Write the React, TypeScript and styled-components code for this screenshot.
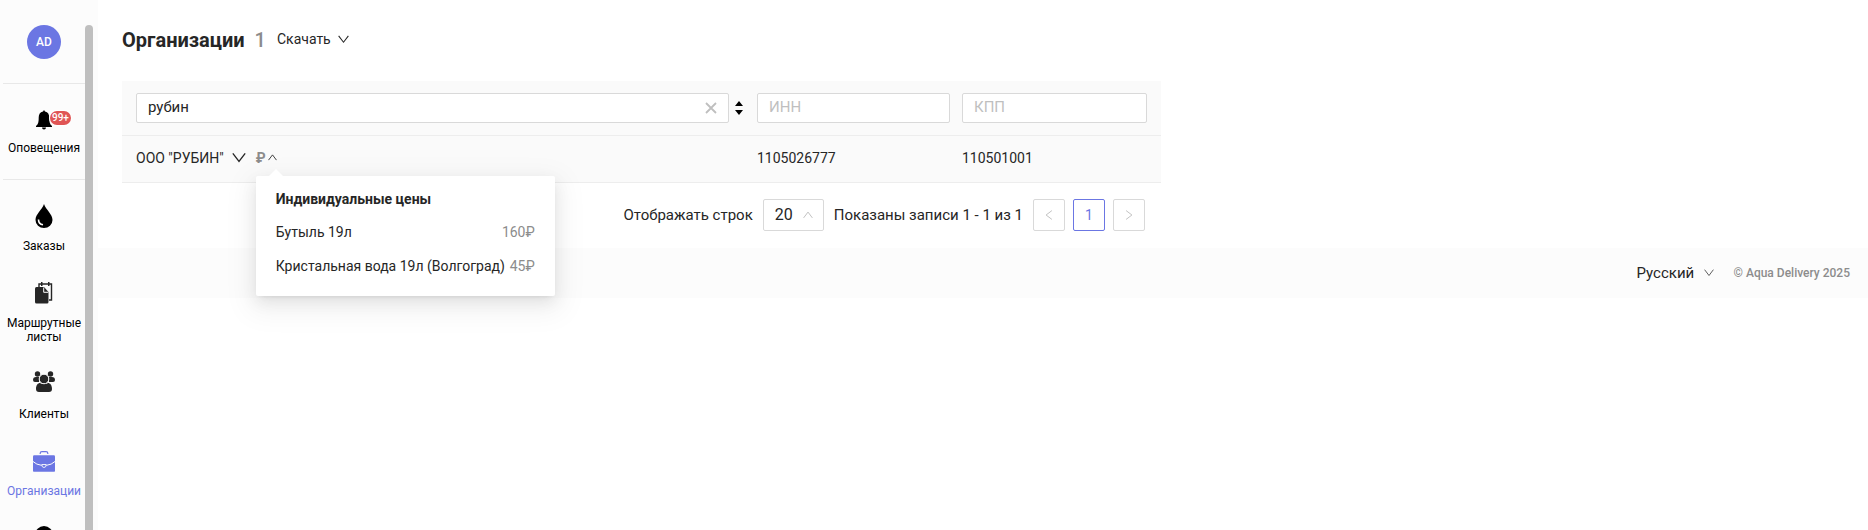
import React from 'react';
import styled, { createGlobalStyle, css } from 'styled-components';

const Global = createGlobalStyle`
  *, *::before, *::after { box-sizing: border-box; }
  body { margin: 0; background: #fff; color: #262626; font: 14px/22px Roboto, sans-serif; }
  html { height: 100%; overflow: hidden; }
  body, #root { height: 100%; }
  button, input, select { font: inherit; color: inherit; margin: 0; }
  button { background: none; border: 0; padding: 0; cursor: pointer; }
  svg { display: block; }
  h1, h2, p { margin: 0; padding: 0; }
`;

const Shell = styled.div`display: flex; height: 100vh; overflow: hidden;`;

const Side = styled.nav`
  flex: 0 0 98px; display: flex; background: #fcfcfc; padding-top: 25px; overflow: hidden;
`;
const SideList = styled.div`
  width: 82px; margin-left: 3px; display: flex; flex-direction: column; flex-shrink: 0;
`;
const Avatar = styled.button`
  width: 34px; height: 34px; flex-shrink: 0; border-radius: 50%; background: #6b76e3; color: #fff;
  font-size: 12px; font-weight: 500; margin: 0 auto 24px;
`;
const NavItem = styled.a<{ $h: number; $top: number; $gap: number; $active?: boolean; $line?: boolean }>`
  height: ${p => p.$h}px; padding-top: ${p => p.$top}px; gap: ${p => p.$gap}px; flex-shrink: 0;
  display: flex; flex-direction: column; align-items: center;
  font-size: 12px; line-height: 14px; text-align: center; text-decoration: none;
  color: ${p => (p.$active ? '#6b76e3' : '#000')};
  ${p => p.$line && css`border-top: 1px solid #e8e8e8;`}
`;
const IconWrap = styled.span`position: relative; display: block;`;
const Count = styled.span`
  position: absolute; left: 14px; top: 1px; height: 14px; padding: 0 2px; border-radius: 7px;
  background: #e05555; color: #fff; font-size: 10px; line-height: 14px; font-weight: 500;
  box-shadow: 0 0 0 1px #fff;
`;
const ScrollThumb = styled.div`width: 8px; height: 100%; border-radius: 4px 4px 0 0; background: #bfbfbf;`;

const Content = styled.div`flex: 1; min-width: 0;`;
const Main = styled.main`padding: 28px 24px 17px;`;
const Head = styled.header`display: flex; align-items: center; height: 24px; margin-bottom: 29px;`;
const Title = styled.h1`font-size: 20px; line-height: 24px; font-weight: 700;`;
const Total = styled.span`font-size: 20px; line-height: 24px; font-weight: 500; color: #8c8c8c; margin: 0 11px 0 10px;`;
const TextButton = styled.button`display: flex; align-items: center; gap: 7px; line-height: 20px; padding-bottom: 2px;`;

const Block = styled.section`width: 1039px; max-width: 100%;`;
const Table = styled.table`
  width: 100%; table-layout: fixed; border-collapse: collapse; background: #fafafa;
  th, td { border-bottom: 1px solid #ededed; padding: 0 0 0 14px; text-align: left; font-weight: 400; }
  th { height: 54px; }
  td { height: 47px; padding-bottom: 2px; }
  th + th, td + td { padding-left: 0; padding-right: 12px; }
  th:last-child { padding-right: 14px; }
`;
const Cell = styled.div`display: flex; align-items: center;`;
const Field = styled.label`
  flex: 1; min-width: 0; height: 30px; display: flex; align-items: center; padding: 0 11px;
  background: #fff; border: 1px solid #d9d9d9; border-radius: 2px;
`;
const Input = styled.input`
  flex: 1; min-width: 0; border: 0; outline: 0; padding: 0 0 2px; background: none; font-size: 15px; line-height: 20px; height: 22px;
  &::placeholder { color: #bfbfbf; opacity: 1; }
`;
const Sort = styled.button`margin: 0 14px 0 6px;`;
const NameCell = styled.div`display: flex; align-items: center;`;
const ArrowButton = styled.button`margin: 0 10px 0 8px;`;
const PriceAnchor = styled.div`position: relative;`;
const PriceButton = styled.button`display: flex; align-items: center; gap: 2px; font-weight: 700; color: #8c8c8c;`;
const Popover = styled.div`
  position: absolute; z-index: 2; left: 0; top: 29px; width: 299px; padding: 12px 20px 7px;
  background: #fff; border-radius: 2px; white-space: nowrap;
  box-shadow: 0 3px 6px -4px rgba(0,0,0,.12), 0 6px 16px rgba(0,0,0,.08), 0 9px 28px 8px rgba(0,0,0,.05);
  &::before {
    content: ''; position: absolute; left: 13px; top: -7px; border: solid transparent;
    border-width: 0 7px 7px; border-bottom-color: #fff;
  }
`;
const PopTitle = styled.h2`font-size: 14px; line-height: 22px; font-weight: 700; margin-bottom: 11px;`;
const PriceRow = styled.p`display: flex; justify-content: space-between; line-height: 22px; margin-bottom: 12px;`;
const Price = styled.span`color: #8c8c8c;`;

const Pager = styled.div`display: flex; align-items: center; justify-content: flex-end; padding: 16px 16px 0 0; font-size: 15px;`;
const SelectBox = styled.div<{ $wide?: boolean }>`
  position: relative; display: flex; align-items: center;
  svg { position: absolute; right: ${p => (p.$wide ? 0 : 11)}px; pointer-events: none; }
`;
const SizeSelect = styled.select`
  appearance: none; width: 61px; height: 32px; padding: 0 0 0 11px;
  border: 1px solid #d9d9d9; border-radius: 2px; background: #fff; font-size: 16px;
`;
const PagerLabel = styled.label`margin-right: 10px;`;
const Range = styled.span`margin: 0 2px 0 10px;`;
const PageButton = styled.button<{ $current?: boolean }>`
  width: 32px; height: 32px; margin-left: 8px; border-radius: 2px; display: grid; place-items: center;
  border: 1px solid ${p => (p.$current ? '#6b76e3' : '#d9d9d9')};
  color: ${p => (p.$current ? '#6b76e3' : '#bfbfbf')}; font-size: 14px;
`;

const Footer = styled.footer`
  height: 50px; background: #fcfcfc; display: flex; align-items: center; justify-content: flex-end;
  padding-right: 18px; gap: 20px;
`;
const LangSelect = styled.select`appearance: none; border: 0; background: none; padding: 0; width: 77px; font-size: 15px;`;
const Copy = styled.span`font-size: 12px; font-weight: 500; color: #8c8c8c;`;

function Chevron({ dir = 'down', size = 10, color = '#262626' }: { dir?: 'down' | 'up' | 'left' | 'right'; size?: number; color?: string }) {
  const d = { down: 'M.7 2l5.300 7L11.300 2', up: 'M.7 9.500l5.300-7 5.300 7', left: 'M9.500 .7l-7 5.300 7 5.300', right: 'M2.500 .7l7 5.300-7 5.300' }[dir];
  return (
    <svg width={size} height={size} viewBox="0 0 12 12" fill="none" stroke={color} strokeWidth="1.150" aria-hidden="true">
      <path d={d} />
    </svg>
  );
}

const Bell = () => (
  <svg width="16" height="20" viewBox="0 0 16 20" aria-hidden="true">
    <path d="M8 0l1 1.500c3 .6 4.300 3 4.300 6 0 4 .2 6.500 2.700 8.500v1H0v-1c2.500-2 2.700-4.500 2.700-8.500 0-3 1.300-5.400 4.300-6z" />
    <path d="M6 17.500h4a2 2 0 0 1-4 0" />
  </svg>
);
const Drop = () => (
  <svg width="18" height="24" viewBox="0 0 18 24" aria-hidden="true">
    <path d="M9 0C7 6 .5 10 .5 16a8.500 8 0 0 0 17 0C17.500 10 11 6 9 0z" />
    <path d="M3.500 15.500c0 3 1.500 4.800 4.500 5.300" fill="none" stroke="#fcfcfc" strokeWidth="1.600" />
  </svg>
);
const Sheets = () => (
  <svg width="18" height="22" viewBox="0 0 18 22" fill="#262626" aria-hidden="true">
    <path d="M4 5V2h12.500v16H14" fill="none" stroke="#262626" strokeWidth="1.400" />
    <path d="M6 0h1.500v4H6zM13 0h1.500v4H13z" />
    <path d="M0 6.500Q0 5 1.500 5H9l4.500 5v10q0 1.500-1.500 1.500H1.500Q0 21.500 0 20z" />
    <path d="M8.700 5.500v4.800h4.600" fill="none" stroke="#fcfcfc" strokeWidth="1" />
  </svg>
);
const People = () => (
  <svg width="22" height="21" viewBox="0 0 22 21" fill="#262626" aria-hidden="true">
    <circle cx="4.500" cy="3" r="2.700" /><circle cx="17.500" cy="3" r="2.700" />
    <path d="M0 9q0-3 3-3h3v5H2q-2 0-2-2zM22 9q0-3-3-3h-3v5h4q2 0 2-2z" />
    <circle cx="11" cy="8" r="4.800" stroke="#fcfcfc" />
    <path d="M3 18c0-4 2-6 4-6 2 1.600 6 1.600 8 0 2 0 4 2 4 6 0 2-1 3-3 3H6c-2 0-3-1-3-3z" />
  </svg>
);
const Briefcase = () => (
  <svg width="22" height="21" viewBox="0 0 22 21" fill="#6b76e3" aria-hidden="true">
    <path d="M7.200 3V2.200Q7.200.7 9 .7h4q1.800 0 1.800 1.500V3" fill="none" stroke="#6b76e3" strokeWidth="1.200" />
    <path d="M0 5.500Q0 4.300 1.200 4.300h19.600Q22 4.300 22 5.500V20q0 .8-.8.8H.8Q0 20.800 0 20z" />
    <path d="M0 10.500q3.500 3.300 8.500 3.800h5q5-.5 8.500-3.800" fill="none" stroke="#fcfcfc" strokeWidth="1" />
    <path d="M8.800 13.500h4.400q0 3-2.200 3t-2.200-3z" stroke="#fcfcfc" strokeWidth=".9" />
  </svg>
);
const Dot = () => (
  <svg width="18" height="18" viewBox="0 0 18 18" aria-hidden="true"><circle cx="9" cy="9" r="9" /></svg>
);

export default function App() {
  return (
    <Shell>
      <Global />
      <Side>
        <SideList>
          <Avatar>AD</Avatar>
          <NavItem href="#alerts" $h={96} $top={26} $gap={11} $line>
            <IconWrap><Bell /><Count>99+</Count></IconWrap>Оповещения
          </NavItem>
          <NavItem href="#orders" $h={103} $top={24} $gap={11} $line><Drop />Заказы</NavItem>
          <NavItem href="#routes" $h={89} $top={0} $gap={12}><Sheets />Маршрутные листы</NavItem>
          <NavItem href="#clients" $h={80} $top={0} $gap={15}><People />Клиенты</NavItem>
          <NavItem href="#organizations" $h={75} $top={0} $gap={12} $active><Briefcase />Организации</NavItem>
          <NavItem href="#help" aria-label="Помощь" $h={22} $top={0} $gap={0}><Dot /></NavItem>
        </SideList>
        <ScrollThumb />
      </Side>
      <Content>
        <Main>
          <Head>
            <Title>Организации</Title>
            <Total>1</Total>
            <TextButton>Скачать <Chevron size={11} /></TextButton>
          </Head>
          <Block>
            <Table>
              <colgroup><col /><col width="205" /><col width="199" /></colgroup>
              <thead>
                <tr>
                  <th>
                    <Cell>
                      <Field>
                        <Input defaultValue="рубин" aria-label="Название" />
                        <svg width="12" height="12" viewBox="0 0 12 12" stroke="#bfbfbf" strokeWidth="1.800" aria-hidden="true"><path d="M1 1l10 10M11 1L1 11" /></svg>
                      </Field>
                      <Sort aria-label="Сортировать">
                        <svg width="8" height="14" viewBox="0 0 8 14" aria-hidden="true"><path d="M4 0l4 5H0zM0 9h8l-4 5z" /></svg>
                      </Sort>
                    </Cell>
                  </th>
                  <th><Field><Input placeholder="ИНН" aria-label="ИНН" /></Field></th>
                  <th><Field><Input placeholder="КПП" aria-label="КПП" /></Field></th>
                </tr>
              </thead>
              <tbody>
                <tr>
                  <td>
                    <NameCell>
                      ООО "РУБИН"
                      <ArrowButton aria-label="Развернуть"><Chevron size={14} /></ArrowButton>
                      <PriceAnchor>
                        <PriceButton aria-label="Цены">₽<Chevron dir="up" size={9} /></PriceButton>
                        <Popover>
                          <PopTitle>Индивидуальные цены</PopTitle>
                          <PriceRow>Бутыль 19л <Price>160₽</Price></PriceRow>
                          <PriceRow>Кристальная вода 19л (Волгоград) <Price>45₽</Price></PriceRow>
                        </Popover>
                      </PriceAnchor>
                    </NameCell>
                  </td>
                  <td>1105026777</td>
                  <td>110501001</td>
                </tr>
              </tbody>
            </Table>
            <Pager>
              <PagerLabel htmlFor="page-size">Отображать строк</PagerLabel>
              <SelectBox>
                <SizeSelect id="page-size"><option>20</option></SizeSelect>
                <Chevron dir="up" color="#bfbfbf" />
              </SelectBox>
              <Range>Показаны записи 1 - 1 из 1</Range>
              <PageButton aria-label="Назад"><Chevron dir="left" color="#bfbfbf" /></PageButton>
              <PageButton $current>1</PageButton>
              <PageButton aria-label="Вперёд"><Chevron dir="right" color="#bfbfbf" /></PageButton>
            </Pager>
          </Block>
        </Main>
        <Footer>
          <SelectBox $wide>
            <LangSelect aria-label="Язык"><option>Русский</option></LangSelect>
            <Chevron color="#595959" />
          </SelectBox>
          <Copy>© Aqua Delivery 2025</Copy>
        </Footer>
      </Content>
    </Shell>
  );
}
